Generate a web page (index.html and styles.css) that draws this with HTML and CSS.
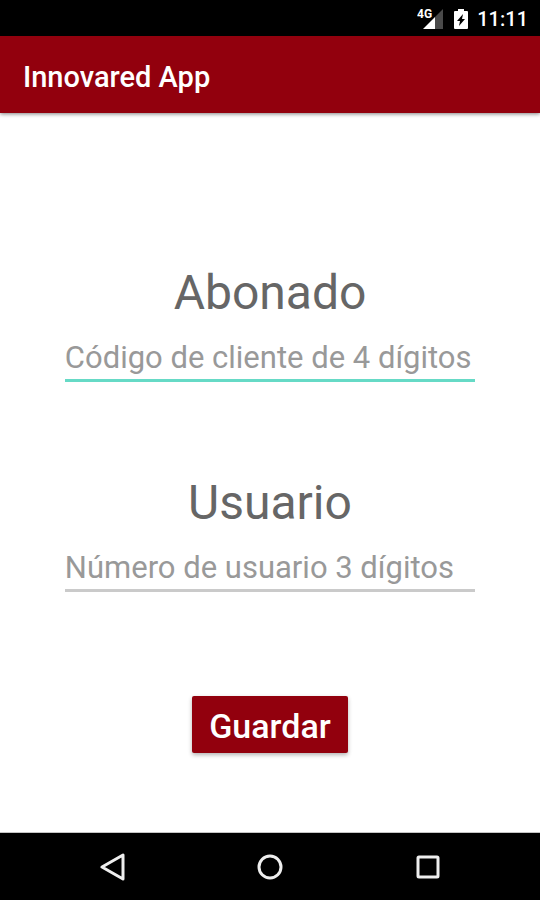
FILE: index.html
```html
<!DOCTYPE html>
<html lang="es">
<head>
    <meta charset="UTF-8">
    <meta name="viewport" content="width=device-width, initial-scale=1.0">
    <title>Innovared App</title>
    <link rel="stylesheet" href="styles.css">
</head>
<body>
    <div class="status-bar">
        <svg class="signal-icon" width="28" height="24" viewBox="0 0 28 24" aria-hidden="true">
            <path d="M18 10 L26 2 V22 H18 Z" fill="#4a4a4a"/>
            <path d="M6 22 L18 10 V22 Z" fill="#fff"/>
            <text class="signal-text" x="0" y="11">4G</text>
        </svg>
        <svg class="battery-icon" width="14" height="20" viewBox="0 0 14 20" aria-hidden="true">
            <path d="M4 0 H10 V2 H13 Q14 2 14 3 V19 Q14 20 13 20 H1 Q0 20 0 19 V3 Q0 2 1 2 H4 Z" fill="#fff"/>
            <path d="M9 5 L3 12 H6 L5 17 L11 10 H8 Z" fill="#000"/>
        </svg>
        <span class="clock">11:11</span>
    </div>

    <header class="app-bar">
        <h1>Innovared App</h1>
    </header>

    <main>
        <form class="form">
            <div class="field">
                <label for="abonado">Abonado</label>
                <input class="active" type="text" id="abonado" inputmode="numeric" maxlength="4" placeholder="Código de cliente de 4 dígitos">
            </div>
            <div class="field">
                <label for="usuario">Usuario</label>
                <input type="text" id="usuario" inputmode="numeric" maxlength="3" placeholder="Número de usuario 3 dígitos">
            </div>
            <button class="save-btn" type="button">Guardar</button>
        </form>
    </main>

    <nav class="nav-bar">
        <button class="nav-btn" type="button" aria-label="Atrás">
            <svg width="28" height="28" viewBox="0 0 28 28">
                <path d="M24 2 V26 L3 14 Z"/>
            </svg>
        </button>
        <button class="nav-btn" type="button" aria-label="Inicio">
            <svg width="28" height="28" viewBox="0 0 28 28">
                <circle cx="14" cy="14" r="11"/>
            </svg>
        </button>
        <button class="nav-btn" type="button" aria-label="Recientes">
            <svg width="28" height="28" viewBox="0 0 28 28">
                <rect x="5" y="4" width="20" height="20" rx="1"/>
            </svg>
        </button>
    </nav>
</body>
</html>
```

FILE: styles.css
```css
* {
    box-sizing: border-box;
}

body {
    margin: 0;
    min-height: 100vh;
    display: flex;
    flex-direction: column;
    background: #fff;
    font-family: Roboto, 'Liberation Sans', sans-serif;
}

.status-bar {
    display: flex;
    align-items: center;
    justify-content: flex-end;
    height: 36px;
    padding: 2px 12px 0;
    background: #000;
    color: #fff;
}

.signal-icon {
    margin-right: 9px;
}

.signal-text {
    font-family: 'Liberation Sans Narrow', Roboto, sans-serif;
    font-size: 12px;
    font-weight: bold;
    fill: #fff;
}

.battery-icon {
    margin-right: 9px;
}

.clock {
    font-size: 20px;
    font-weight: 500;
    line-height: 24px;
}

.app-bar {
    display: flex;
    align-items: center;
    padding: 23px 23px 18px;
    background: #92000d;
    color: #fff;
    box-shadow: 0 1px 4px rgba(0,0,0,0.5);
}

.app-bar h1 {
    margin: 0;
    font-size: 29px;
    font-weight: 500;
    line-height: 36px;
}

main {
    flex: 1;
    display: flex;
    flex-direction: column;
    justify-content: flex-end;
    padding: 0 12% 80px;
}

.form {
    display: flex;
    flex-direction: column;
    align-items: center;
}

.field {
    display: flex;
    flex-direction: column;
    width: 100%;
    margin-bottom: 93px;
}

.field:nth-of-type(2) {
    margin-bottom: 104px;
}

.field label {
    font-size: 48px;
    line-height: 56px;
    text-align: center;
    color: #666;
}

.field input {
    width: 100%;
    height: 61px;
    padding: 18px 0 4px;
    border: none;
    border-bottom: 3px solid #cacaca;
    background: none;
    font-family: inherit;
    font-size: 31px;
    line-height: 36px;
    outline: none;
    color: #333;
}

.field input::placeholder {
    color: #999;
    opacity: 1;
}

.field input.active {
    border-bottom-color: #66dac6;
}

.save-btn {
    padding: 12px 17px 9px;
    border: none;
    border-radius: 2px;
    background: #92000d;
    color: #fff;
    font-family: inherit;
    font-size: 34px;
    font-weight: 500;
    line-height: 36px;
    box-shadow: 0 2px 4px rgba(0,0,0,0.3);
    cursor: pointer;
}

.nav-bar {
    display: flex;
    align-items: center;
    justify-content: center;
    gap: 129px;
    height: 67px;
    background: #000;
    box-shadow: 0 -1px 0 #c4c4c4;
}

.nav-btn {
    display: flex;
    padding: 0;
    border: none;
    background: none;
    cursor: pointer;
}

.nav-btn svg {
    fill: none;
    stroke: #eee;
    stroke-width: 3;
    stroke-linejoin: round;
}
```
